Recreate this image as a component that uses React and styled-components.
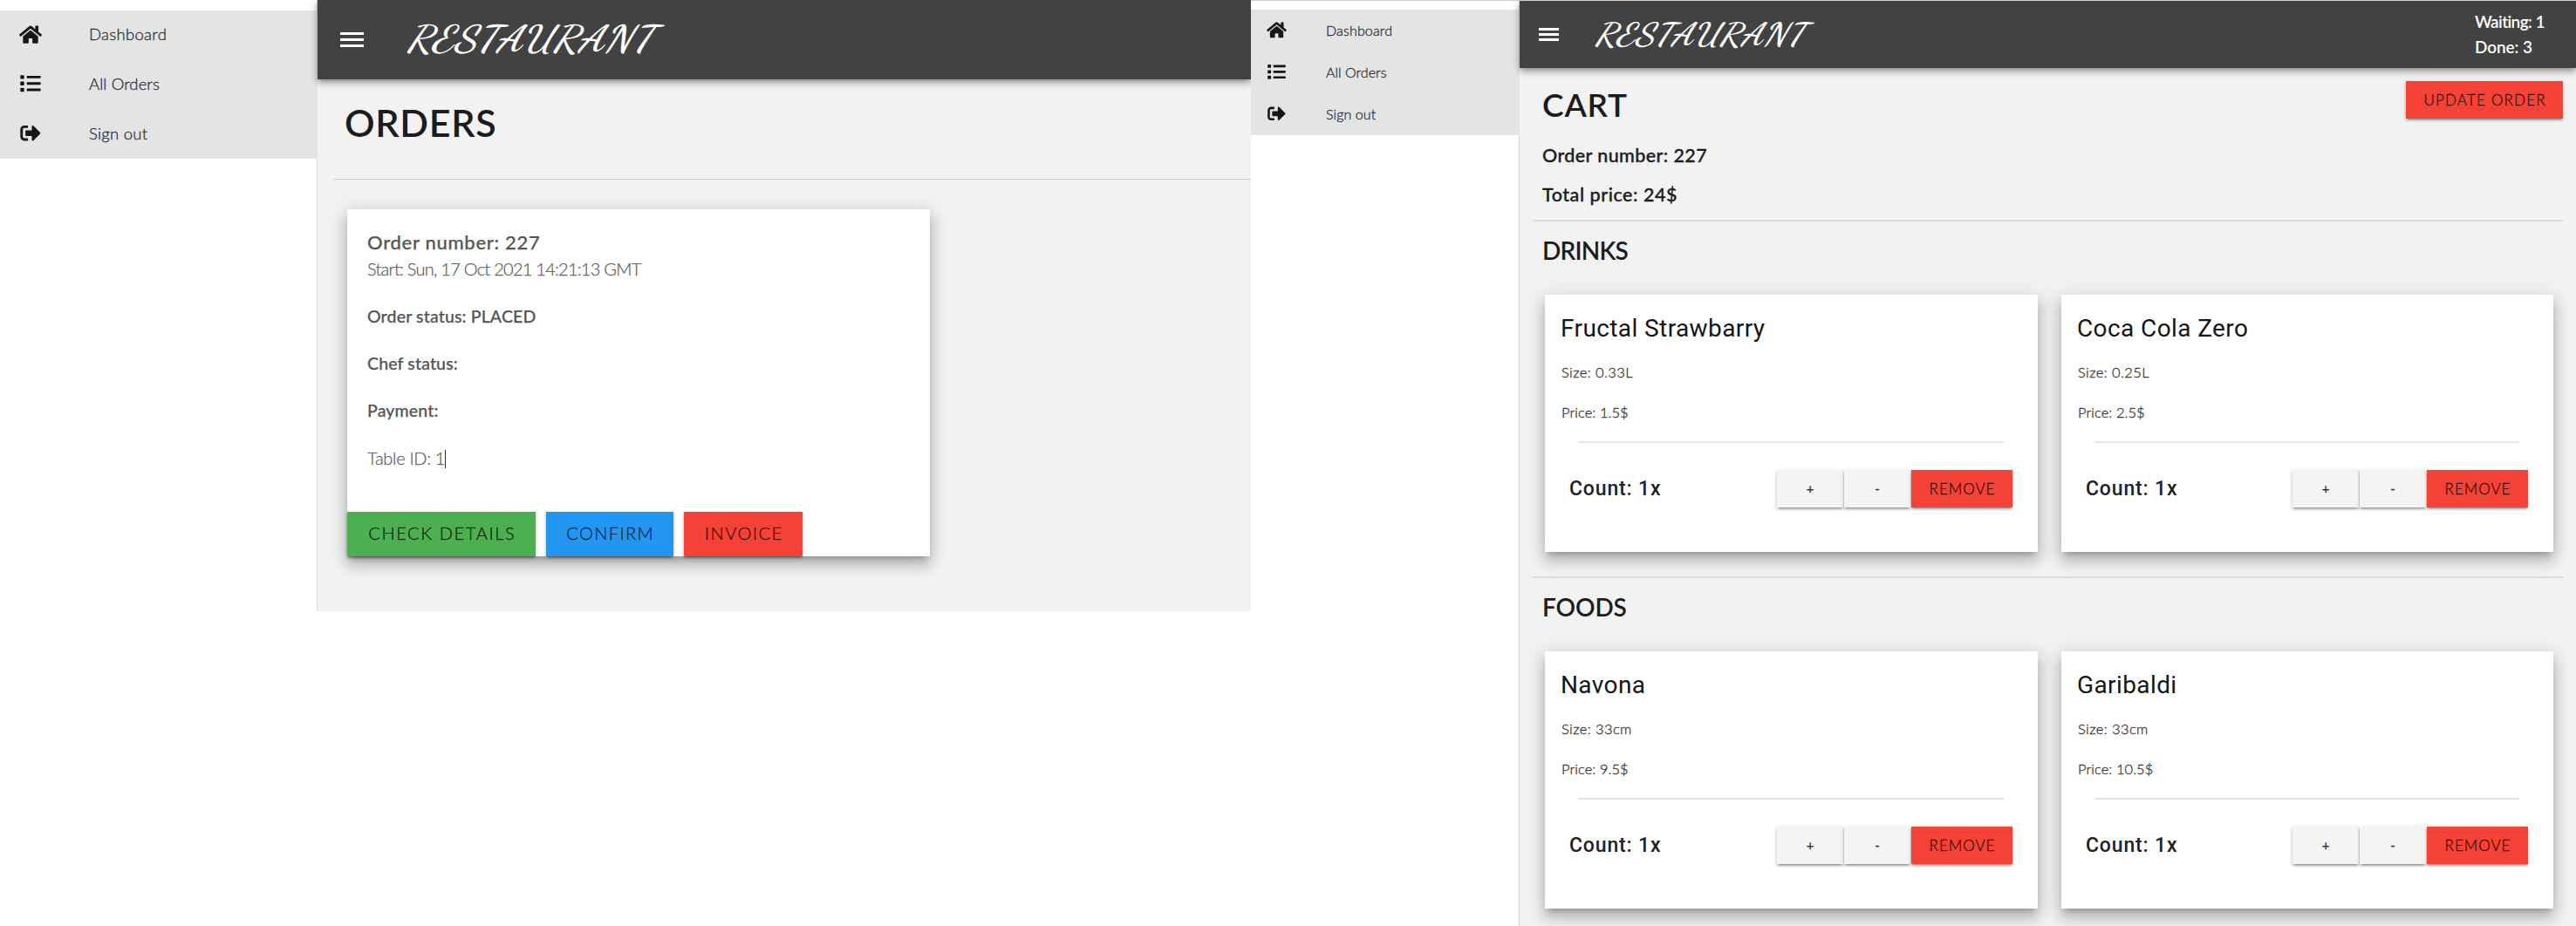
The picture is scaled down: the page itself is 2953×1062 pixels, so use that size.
import React from 'react';
import styled, { createGlobalStyle } from 'styled-components';
import { FaHome, FaList, FaSignOutAlt } from 'react-icons/fa';

const GlobalStyle = createGlobalStyle`
  *, *::before, *::after { box-sizing: border-box; }
  body {
    margin: 0;
    background: #fff;
    font-family: Lato, "Open Sans", sans-serif;
    overflow: hidden;
  }
  h1, h2, h3, p, ul { margin: 0; padding: 0; }
  button { border: 0; margin: 0; padding: 0; font-family: inherit; }
`;

const Desktop = styled.main`
  display: flex;
  align-items: flex-start;
  width: 2953px;
  height: 1062px;
  overflow: hidden;
`;

const Window = styled.section`
  display: flex;
  flex: none;
  width: ${(p) => p.$width}px;
  height: ${(p) => p.$height}px;
  border-top: ${(p) => (p.$edge ? '1px solid #cfcfcf' : '0')};
  overflow: hidden;
`;

const Sidebar = styled.nav`
  flex: none;
  width: ${(p) => p.$width}px;
  padding-top: ${(p) => p.$top}px;
  background: #fff;
  border-right: 1px solid #d9d9d9;
`;

const Menu = styled.ul`
  display: flex;
  flex-direction: column;
  margin-right: -1px;
  list-style: none;
  background: #e4e4e4;
`;

const MenuItem = styled.li`
  display: flex;
  align-items: center;
  height: ${(p) => p.$height}px;
  padding: 0 0 2px ${(p) => p.$pad}px;
  color: #2e2e2e;
  font-size: ${(p) => p.$size}px;
  font-weight: 300;
  svg {
    flex: none;
    width: ${(p) => p.$icon}px;
    height: ${(p) => p.$icon * 0.9}px;
    color: #161616;
  }
`;

const MenuLabel = styled.span`
  margin-left: ${(p) => p.$gap}px;
  letter-spacing: ${(p) => p.$track}px;
  -webkit-text-stroke: 0.3px currentColor;
`;

const Main = styled.div`
  display: flex;
  flex: 1;
  flex-direction: column;
  min-width: 0;
  background: #f2f2f2;
`;

const AppBar = styled.header`
  position: relative;
  z-index: 1;
  display: flex;
  align-items: center;
  flex: none;
  height: ${(p) => p.$height}px;
  padding-left: ${(p) => p.$pad}px;
  background: #424242;
  box-shadow: 0 3px 6px -1px rgba(0, 0, 0, 0.3), 0 5px 8px rgba(0, 0, 0, 0.14), 0 1px 13px rgba(0, 0, 0, 0.12);
`;

const Burger = styled.button`
  display: flex;
  flex-direction: column;
  justify-content: space-between;
  width: ${(p) => p.$width}px;
  height: ${(p) => p.$height}px;
  background: none;
  span { height: 3px; background: #fff; }
`;

const Brand = styled.div`
  margin-left: ${(p) => p.$gap}px;
  padding-right: 40px;
  color: #fff;
  font: italic 600 ${(p) => p.$size}px/1.2 "Dancing Script", cursive;
  letter-spacing: 0.5px;
  transform: scaleX(${(p) => p.$stretch});
  transform-origin: left center;
`;

const Tally = styled.div`
  width: 116px;
  margin-left: auto;
  color: #fff;
  font-size: 19px;
  font-weight: 600;
  line-height: 28.5px;
  p { letter-spacing: -0.6px; }
  p + p { letter-spacing: -0.1px; }
`;

const OrdersHead = styled.div`
  flex: none;
  margin-left: 18px;
  padding: 0 0 0 13px;
  height: 115px;
  border-bottom: 1px solid #cecece;
`;

const PageTitle = styled.h1`
  color: #1c1c1c;
  font-size: ${(p) => p.$size}px;
  font-weight: 600;
  line-height: ${(p) => p.$line}px;
  letter-spacing: ${(p) => p.$track}px;
`;

const lift = '0 6px 7px -4px rgba(0,0,0,.24), 0 11px 14px 1px rgba(0,0,0,.15), 0 4px 20px 3px rgba(0,0,0,.13)';

const OrderCard = styled.article`
  display: flex;
  flex-direction: column;
  flex: none;
  width: 668px;
  height: 398px;
  margin: 34px 0 0 34px;
  padding-top: 23px;
  background: #fff;
  box-shadow: ${lift};
`;

const OrderLine = styled.p`
  padding-left: 23px;
  color: ${(p) => (p.$strong ? '#565656' : '#5c5c5c')};
  font-size: ${(p) => p.$size}px;
  font-weight: ${(p) => (p.$strong ? 500 : 300)};
  line-height: ${(p) => p.$line}px;
  letter-spacing: ${(p) => p.$track}px;
  -webkit-text-stroke: 0.25px currentColor;
  white-space: nowrap;
`;

const OrderMeta = styled.div`
  padding-top: 12px;
`;

const Caret = styled.span`
  display: inline-block;
  width: 1px;
  height: 21px;
  background: #333;
  vertical-align: -4px;
`;

const ButtonRow = styled.div`
  display: flex;
  gap: ${(p) => p.$gap}px;
  margin-top: ${(p) => p.$top}px;
`;

const fills = { green: '#4caf50', blue: '#2196f3', red: '#f44336', plain: '#f4f4f4' };

const Button = styled.button`
  width: ${(p) => p.$width}px;
  height: ${(p) => p.$height}px;
  padding-bottom: ${(p) => (p.$height > 50 ? 4 : 1)}px;
  color: rgba(0, 0, 0, 0.78);
  background: ${(p) => fills[p.$tone]};
  box-shadow: 0 3px 2px -2px rgba(0, 0, 0, 0.3), 0 2px 3px rgba(0, 0, 0, 0.2), 0 1px 5px rgba(0, 0, 0, 0.12);
  font-size: ${(p) => p.$size}px;
  font-weight: ${(p) => (p.$tone === 'plain' ? 400 : 300)};
  letter-spacing: ${(p) => p.$track}px;
  text-indent: ${(p) => p.$track}px;
  -webkit-text-stroke: 0.3px currentColor;
`;

const CartHead = styled.div`
  display: flex;
  flex: none;
  justify-content: space-between;
  height: 174px;
  padding: 0 15px 0 26px;
`;

const CartInfo = styled.div`
  padding-top: 20px;
`;

const Fact = styled.p`
  color: #1c1c1c;
  font-size: 21.5px;
  font-weight: 500;
  line-height: 45px;
  letter-spacing: ${(p) => p.$track}px;
  -webkit-text-stroke: 0.35px currentColor;
`;

const Facts = styled.div`
  padding-top: 14px;
`;

const UpdateSlot = styled.div`
  padding-top: 15px;
`;

const Category = styled.section`
  position: relative;
  flex: none;
  margin-left: 15px;
  height: 409px;
  background: #f2f2f2;
  &::before {
    content: "";
    display: block;
    width: 1181px;
    height: 2px;
    background: #dcdcdc;
  }
`;

const CategoryTitle = styled.h2`
  padding-left: 11px;
  color: #1c1c1c;
  font-size: 28px;
  font-weight: 600;
  line-height: 67px;
  letter-spacing: ${(p) => p.$track}px;
`;

const Grid = styled.div`
  display: grid;
  grid-template-columns: 565px 564px;
  column-gap: 27px;
  margin: 17px 0 0 14px;
`;

const ItemCard = styled.article`
  height: 295px;
  padding-top: 17px;
  background: #fff;
  box-shadow: ${lift};
`;

const ItemName = styled.h3`
  padding-left: 18px;
  color: #151515;
  font: 400 28px/44px Roboto, sans-serif;
  letter-spacing: 0.4px;
`;

const ItemFacts = styled.div`
  padding: 5px 0 0 19px;
  color: #333;
  font-size: 16.5px;
  font-weight: 300;
  line-height: 46px;
  -webkit-text-stroke: 0.3px currentColor;
`;

const FactLine = styled.p`
  letter-spacing: ${(p) => p.$track}px;
`;

const Rule = styled.div`
  height: 2px;
  margin: 10px 39px 0 38px;
  background: #e4e4e4;
`;

const ItemActions = styled.div`
  display: flex;
  align-items: center;
  justify-content: space-between;
  margin: 31px 29px 0 28px;
`;

const Count = styled.span`
  padding-top: 1px;
  color: #222;
  font: 500 23px/42px Roboto, sans-serif;
  letter-spacing: 0.85px;
`;

const navItems = [
  ['Dashboard', FaHome],
  ['All Orders', FaList],
  ['Sign out', FaSignOutAlt],
];

function Nav({ width, top, row, pad, icon, size, gap, tracks }) {
  return (
    <Sidebar $width={width} $top={top}>
      <Menu>
        {navItems.map(([label, Icon], i) => (
          <MenuItem key={label} $height={row} $pad={pad} $size={size} $icon={icon}>
            <Icon />
            <MenuLabel $gap={gap} $track={tracks[i]}>{label}</MenuLabel>
          </MenuItem>
        ))}
      </Menu>
    </Sidebar>
  );
}

function Hamburger({ width, height }) {
  return (
    <Burger $width={width} $height={height} aria-label="Menu">
      <span /><span /><span />
    </Burger>
  );
}

function Item({ name, size, price }) {
  return (
    <ItemCard>
      <ItemName>{name}</ItemName>
      <ItemFacts>
        <FactLine $track={0.4}>Size: {size}</FactLine>
        <FactLine $track={0.05}>Price: {price}</FactLine>
      </ItemFacts>
      <Rule />
      <ItemActions>
        <Count>Count: 1x</Count>
        <ButtonRow $gap={1} $top={0}>
          <Button $tone="plain" $width={76} $height={43} $size={15} $track={0}>+</Button>
          <Button $tone="plain" $width={76} $height={43} $size={15} $track={0}>-</Button>
          <Button $tone="red" $width={116} $height={43} $size={17} $track={1}>REMOVE</Button>
        </ButtonRow>
      </ItemActions>
    </ItemCard>
  );
}

const categories = [
  { title: 'DRINKS', track: -0.8, items: [['Fructal Strawbarry', '0.33L', '1.5$'], ['Coca Cola Zero', '0.25L', '2.5$']] },
  { title: 'FOODS', track: -0.1, items: [['Navona', '33cm', '9.5$'], ['Garibaldi', '33cm', '10.5$']] },
];

export default function App() {
  return (
    <Desktop>
      <GlobalStyle />
      <Window $width={1434} $height={701}>
        <Nav width={364} top={12} row={56.7} pad={22} icon={26} size={18.5} gap={54} tracks={[0.3, 0.1, 0.25]} />
        <Main>
          <AppBar $height={91} $pad={26}>
            <Hamburger width={27} height={17} />
            <Brand $gap={49} $size={42} $stretch={1.145}>RESTAURANT</Brand>
          </AppBar>
          <OrdersHead>
            <PageTitle $size={43} $line={99} $track={0.7}>ORDERS</PageTitle>
          </OrdersHead>
          <OrderCard>
            <OrderLine $strong $size={22} $line={29} $track={0.7}>Order number: 227</OrderLine>
            <OrderLine $size={20} $line={32} $track={-0.74}>Start: Sun, 17 Oct 2021 14:21:13 GMT</OrderLine>
            <OrderMeta>
              <OrderLine $strong $size={19.5} $line={54} $track={0.15}>Order status: PLACED</OrderLine>
              <OrderLine $strong $size={19.5} $line={54} $track={0.15}>Chef status:</OrderLine>
              <OrderLine $strong $size={19.5} $line={54} $track={0.15}>Payment:</OrderLine>
              <OrderLine $size={20} $line={54} $track={-0.3}>Table ID: 1<Caret /></OrderLine>
            </OrderMeta>
            <ButtonRow $gap={12} $top={35}>
              <Button $tone="green" $width={216} $height={51} $size={20} $track={1.65}>CHECK DETAILS</Button>
              <Button $tone="blue" $width={146} $height={51} $size={20} $track={1.4}>CONFIRM</Button>
              <Button $tone="red" $width={136} $height={51} $size={20} $track={1.5}>INVOICE</Button>
            </ButtonRow>
          </OrderCard>
        </Main>
      </Window>
      <Window $width={1519} $height={1062} $edge>
        <Nav width={308} top={10} row={48} pad={18} icon={23} size={16} gap={45} tracks={[0.15, 0.05, 0.1]} />
        <Main>
          <AppBar $height={77} $pad={22}>
            <Hamburger width={23} height={15} />
            <Brand $gap={41} $size={36} $stretch={1.135}>RESTAURANT</Brand>
            <Tally>
              <p>Waiting: 1</p>
              <p>Done: 3</p>
            </Tally>
          </AppBar>
          <CartHead>
            <CartInfo>
              <PageTitle $size={37} $line={44} $track={0.8}>CART</PageTitle>
              <Facts>
                <Fact $track={0.4}>Order number: 227</Fact>
                <Fact $track={0.55}>Total price: 24$</Fact>
              </Facts>
            </CartInfo>
            <UpdateSlot>
              <Button $tone="red" $width={180} $height={43} $size={17} $track={1.2}>UPDATE ORDER</Button>
            </UpdateSlot>
          </CartHead>
          {categories.map((c) => (
            <Category key={c.title}>
              <CategoryTitle $track={c.track}>{c.title}</CategoryTitle>
              <Grid>
                {c.items.map(([name, size, price]) => (
                  <Item key={name} name={name} size={size} price={price} />
                ))}
              </Grid>
            </Category>
          ))}
        </Main>
      </Window>
    </Desktop>
  );
}
